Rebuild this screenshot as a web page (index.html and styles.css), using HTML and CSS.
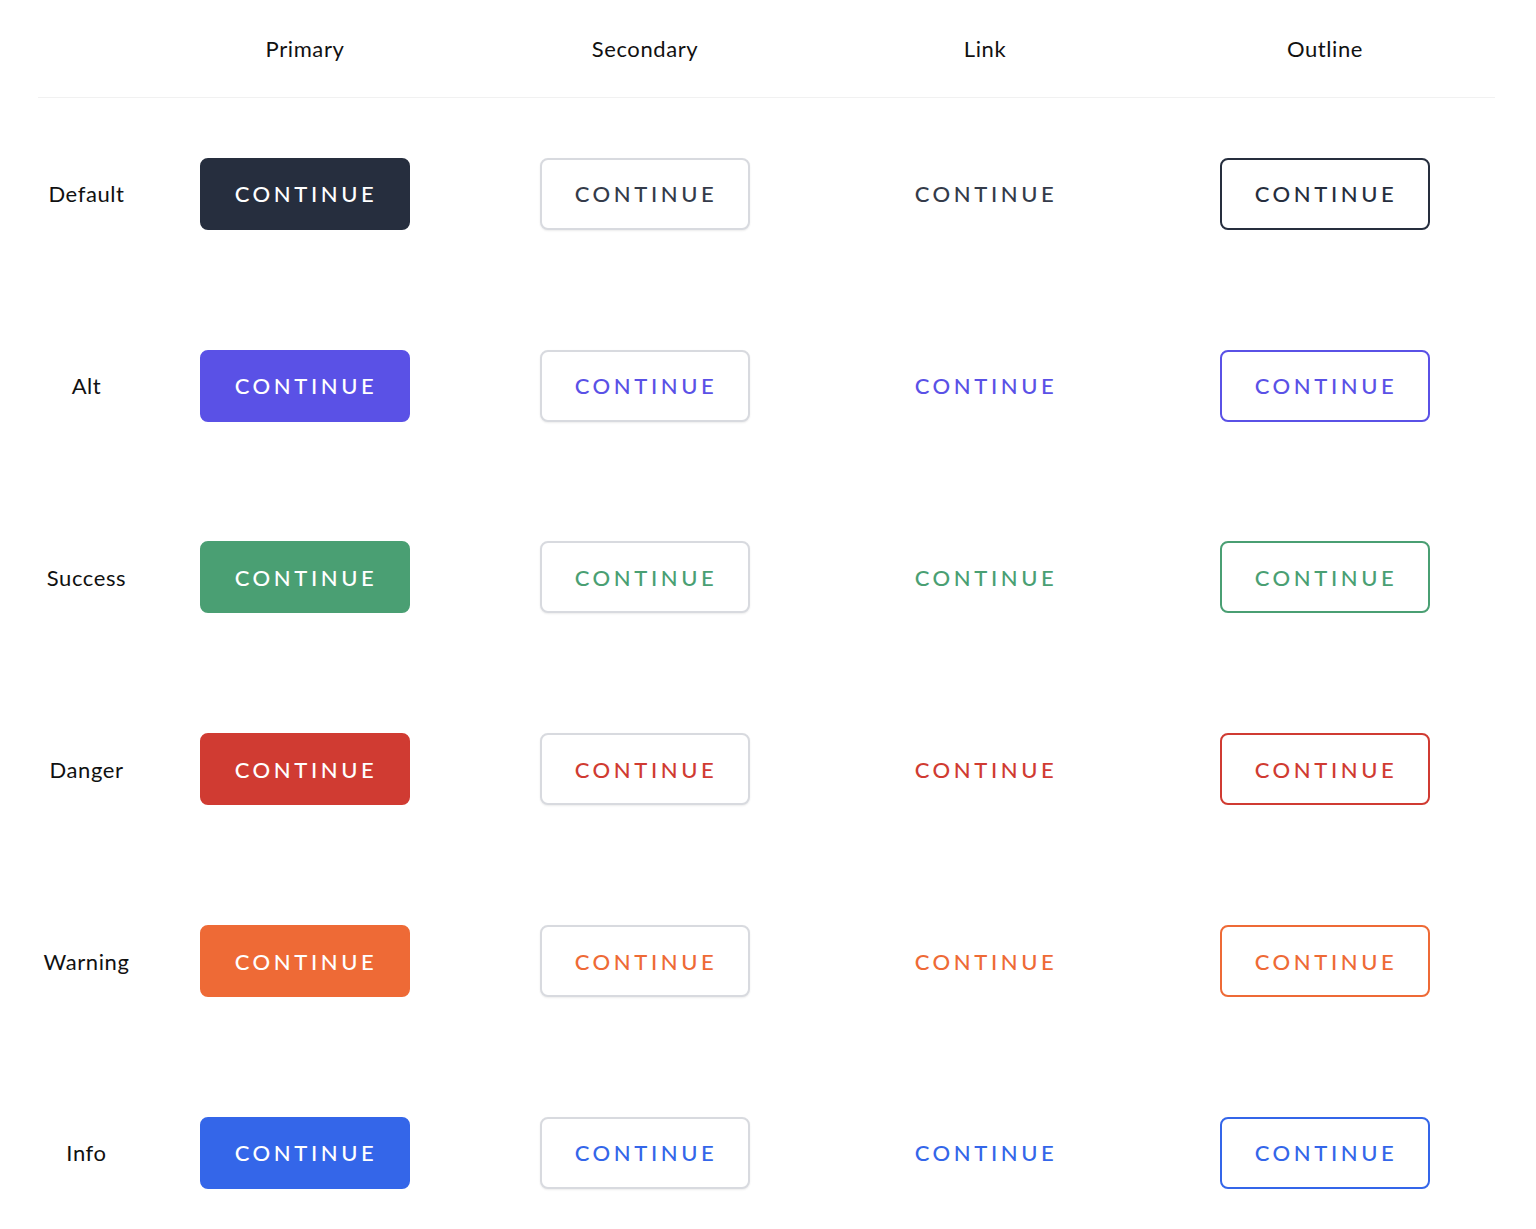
FILE: index.html
```html
<!DOCTYPE html>
<html>
<head>
<meta charset="utf-8">
<link rel="stylesheet" href="styles.css">
</head>
<body>
<div class="table">
  <div class="row head">
    <div class="label"></div>
    <div class="cell">Primary</div>
    <div class="cell">Secondary</div>
    <div class="cell">Link</div>
    <div class="cell">Outline</div>
  </div>
  <div class="row c-default">
    <div class="label">Default</div>
    <div class="cell"><button class="btn primary">CONTINUE</button></div>
    <div class="cell"><button class="btn secondary">CONTINUE</button></div>
    <div class="cell"><button class="btn link">CONTINUE</button></div>
    <div class="cell"><button class="btn outline">CONTINUE</button></div>
  </div>
  <div class="row c-alt">
    <div class="label">Alt</div>
    <div class="cell"><button class="btn primary">CONTINUE</button></div>
    <div class="cell"><button class="btn secondary">CONTINUE</button></div>
    <div class="cell"><button class="btn link">CONTINUE</button></div>
    <div class="cell"><button class="btn outline">CONTINUE</button></div>
  </div>
  <div class="row c-success">
    <div class="label">Success</div>
    <div class="cell"><button class="btn primary">CONTINUE</button></div>
    <div class="cell"><button class="btn secondary">CONTINUE</button></div>
    <div class="cell"><button class="btn link">CONTINUE</button></div>
    <div class="cell"><button class="btn outline">CONTINUE</button></div>
  </div>
  <div class="row c-danger">
    <div class="label">Danger</div>
    <div class="cell"><button class="btn primary">CONTINUE</button></div>
    <div class="cell"><button class="btn secondary">CONTINUE</button></div>
    <div class="cell"><button class="btn link">CONTINUE</button></div>
    <div class="cell"><button class="btn outline">CONTINUE</button></div>
  </div>
  <div class="row c-warning">
    <div class="label">Warning</div>
    <div class="cell"><button class="btn primary">CONTINUE</button></div>
    <div class="cell"><button class="btn secondary">CONTINUE</button></div>
    <div class="cell"><button class="btn link">CONTINUE</button></div>
    <div class="cell"><button class="btn outline">CONTINUE</button></div>
  </div>
  <div class="row c-info">
    <div class="label">Info</div>
    <div class="cell"><button class="btn primary">CONTINUE</button></div>
    <div class="cell"><button class="btn secondary">CONTINUE</button></div>
    <div class="cell"><button class="btn link">CONTINUE</button></div>
    <div class="cell"><button class="btn outline">CONTINUE</button></div>
  </div>
</div>
</body>
</html>
```
FILE: styles.css
```css
html, body {
  margin: 0;
  padding: 0;
  background: #ffffff;
}
body {
  font-family: "Lato", "Noto Sans", sans-serif;
  color: #111111;
}
.table {
  margin-left: 38px;
  width: 1457px;
}
.row {
  display: grid;
  grid-template-columns: 97px repeat(4, 340px);
  height: 191.8px;
  align-items: center;
}
.row.head {
  height: 97px;
  border-bottom: 1px solid #f1f1f1;
}
.label, .cell {
  display: flex;
  justify-content: center;
  align-items: center;
  font-size: 22px;
  letter-spacing: 0.6px;
  color: #111111;
}
.btn {
  font-family: "Lato", "Noto Sans", sans-serif;
  font-size: 22px;
  font-weight: 500;
  letter-spacing: 3.6px;
  width: 210px;
  height: 72px;
  border-radius: 8px;
  border: 2px solid transparent;
  background: transparent;
  padding: 0 0 0 2px;
  cursor: pointer;
  color: var(--c);
}
.btn.primary {
  background: var(--c);
  border-color: var(--c);
  color: #ffffff;
}
.btn.secondary {
  background: #ffffff;
  border-color: #d8dadf;
  box-shadow: 0 1px 2px rgba(0, 0, 0, 0.08);
}
.btn.outline {
  border-color: var(--c);
}
.c-default { --c: #262e3e; }
.c-default .btn.secondary,
.c-default .btn.link { color: #343b4a; }
.c-alt { --c: #5a51e6; }
.c-success { --c: #4a9f73; }
.c-danger { --c: #d03b32; }
.c-warning { --c: #ee6a36; }
.c-info { --c: #3466e9; }
```
